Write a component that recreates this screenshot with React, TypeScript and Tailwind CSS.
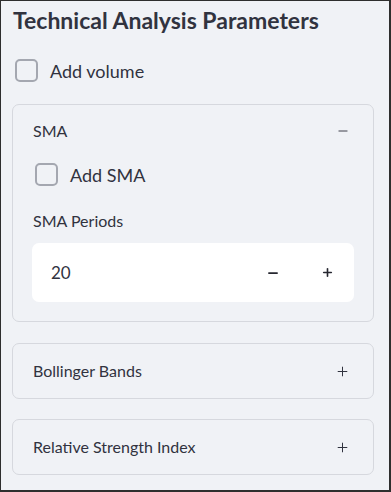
import { Minus, Plus } from "lucide-react";

const FONT = { fontFamily: "Lato, 'Noto Sans', sans-serif" };

function Checkbox({ label }: { label: string }) {
  return (
    <label className="flex items-center gap-[12px]">
      <span className="w-[23px] h-[23px] rounded-[5px] border-2 border-[#a4a7b0] bg-[#f0f2f6] shrink-0" />
      <span className="text-[18px] text-[#31333f] leading-none">{label}</span>
    </label>
  );
}

function Expander({ title }: { title: string }) {
  return (
    <div className="border border-[#d6d8de] rounded-[7px]">
      <div className="flex items-center justify-between pl-[20px] pr-[23px] h-[54px]">
        <span className="text-[16px] text-[#31333f]">{title}</span>
        <Plus size={15} strokeWidth={1.6} className="text-[#31333f]" />
      </div>
    </div>
  );
}

export default function App() {
  return (
    <div className="w-[391px] h-[492px] bg-[#f0f2f6] border border-[#2e2e2e] border-r-2 border-b-2 overflow-hidden" style={FONT}>
      <div className="pl-[11px] pr-[15px]">
        <h2 className="text-[23px] font-bold text-[#31333f] pt-[4px] pl-[1px] leading-[30px]">
          Technical Analysis Parameters
        </h2>
        <div className="mt-[24px] pl-[3px]">
          <Checkbox label="Add volume" />
        </div>

        <div className="mt-[22px] border border-[#d6d8de] rounded-[7px]">
          <div className="flex items-center justify-between pl-[20px] pr-[23px] pt-[16px] leading-[19px]">
            <span className="text-[16px] text-[#31333f]">SMA</span>
            <Minus size={14} strokeWidth={1.6} className="text-[#31333f]" />
          </div>
          <div className="pl-[22px] mt-[23px]">
            <Checkbox label="Add SMA" />
          </div>
          <div className="pl-[20px] mt-[25px] text-[16px] leading-[19px] text-[#31333f]">SMA Periods</div>
          <div className="mx-[19px] mt-[13px] mb-[19px] h-[59px] bg-white rounded-[7px] flex items-center">
            <span className="pl-[19px] text-[17px] text-[#31333f] flex-1">20</span>
            <div className="flex items-center h-full">
              <div className="w-[54px] h-full flex items-center justify-center">
                <Minus size={14} strokeWidth={3} className="text-[#262730]" />
              </div>
              <div className="w-[54px] h-full flex items-center justify-center">
                <Plus size={13} strokeWidth={3} className="text-[#262730]" />
              </div>
            </div>
          </div>
        </div>

        <div className="mt-[21px]">
          <Expander title="Bollinger Bands" />
        </div>
        <div className="mt-[20px]">
          <Expander title="Relative Strength Index" />
        </div>
      </div>
    </div>
  );
}
